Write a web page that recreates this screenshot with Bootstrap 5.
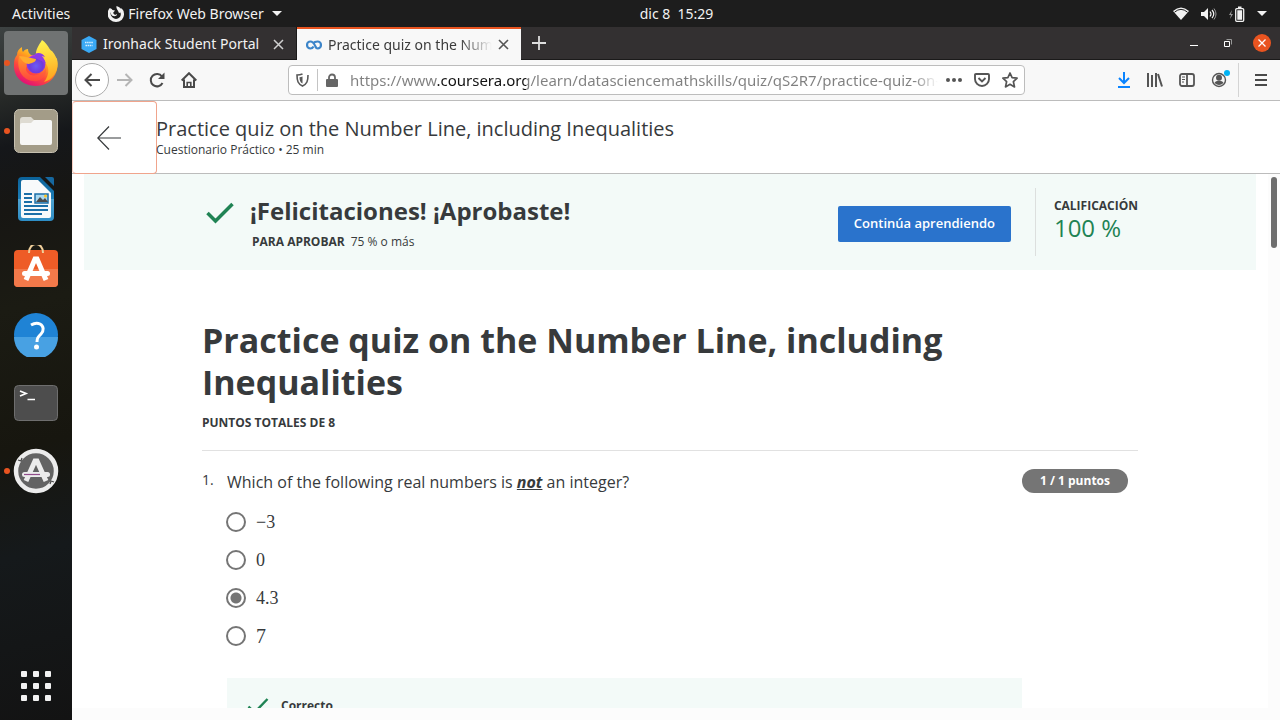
<!DOCTYPE html>
<html lang="es">
<head>
<meta charset="utf-8">
<meta name="viewport" content="width=device-width, initial-scale=1">
<title>Practice quiz on the Number Line, including Inequalities</title>
<link href="https://cdn.jsdelivr.net/npm/bootstrap@5.3.0/dist/css/bootstrap.min.css" rel="stylesheet">
<style>
  body { font-family: "Open Sans", "Noto Sans", sans-serif; color: #373a3c; background: #fff; }
  .shell-ui { font-family: "Noto Sans", "Open Sans", sans-serif; font-size: 14px; line-height: 20px; flex: none; }
  button { color: inherit; }
  .plain { background: none; border: 0; padding: 0; display: flex; align-items: center; justify-content: center; font: inherit; }
  svg { display: block; flex: none; }

  /* desktop bar */
  .desk-bar { height: 27px; background: #1d1d1d; color: #f2f2f2; padding: 0 13px 0 12px; }
  .desk-left { flex: 1 1 74px; gap: 38px; }
  .desk-right { flex: 1 1 0; }
  .clock { white-space: pre; }

  /* launcher */
  .dock { width: 72px; padding: 4px 4px 2px; background: linear-gradient(165deg, #3d4242 0, #272a28 10%, #15171a 17%, #171613 26%, #1b1b13 40%, #17160f 60%, #15191b 75%, #131313 100%); }
  .dock-item { height: 64px; width: 64px; border-radius: 4px; position: relative; }
  .dock-item.focused { background: #707373; }
  .dock-item.running::before { content: ""; position: absolute; left: 0; top: 29px; width: 6px; height: 6px; border-radius: 50%; background: #e95420; }

  /* browser chrome */
  .tab-strip { height: 33px; background: #333031; color: #f2f2f2; border-bottom: 1px solid #1b1a1a; }
  .tab { width: 225px; padding: 2px 12px 0 9px; gap: 6px; height: 32px; border-right: 1px solid #1b1a1a; }
  .tab.current { height: 33px; background: #f8f8f8; color: #3b3b3b; border-top: 2px solid #e95420; border-right: 0; width: 224px; padding-top: 0; }
  .tab span { overflow: hidden; white-space: nowrap; flex: 1 1 0; }
  .tab.current span { -webkit-mask-image: linear-gradient(to left, transparent, #000 32px); mask-image: linear-gradient(to left, transparent, #000 32px); }
  .win-buttons { gap: 26px; padding-right: 9px; }
  .win-close { width: 18px; height: 18px; border-radius: 50%; background: #e95420; margin-left: -5px; }
  .tool-row { height: 41px; background: #f8f8f8; border-bottom: 1px solid #bcbcbc; color: #4f4f4f; padding: 0 13px 0 3px; }
  .back-btn { width: 34px; height: 34px; border: 1px solid #ababab; border-radius: 50%; background: #fff; }
  .url-box { height: 30px; width: 737px; min-width: 0; margin-left: 91px; border: 1px solid #bdbdbd; border-radius: 4px; background: #fff; padding: 0 6px 0 3px; }
  .url-sep { width: 1px; height: 22px; background: #c4c4c4; }
  .url-input { border: 0; outline: 0; padding: 0; min-width: 0; height: 24px; font-size: 15px; color: transparent; background: linear-gradient(to right, #808080 91px, #111 91px, #111 180px, #808080 180px); background-clip: text; -webkit-background-clip: text; -webkit-mask-image: linear-gradient(to left, transparent, #000 24px); mask-image: linear-gradient(to left, transparent, #000 24px); }
  .menu-sep { width: 1px; height: 34px; background: #d4d4d4; }

  /* course header */
  .course-head { height: 73px; border-bottom: 1px solid #bcbcbc; }
  .head-back { width: 85px; height: 73px; margin-right: -1px; padding-right: 12px; border: 1px solid #f0a48c; border-left-color: #f8d0c4; border-radius: 4px; }
  .head-title { font-size: 20px; line-height: 24px; }
  .meta { font-size: 12px; line-height: 18px; }
  .tag { font-size: 12px; line-height: 18px; font-weight: 700; }

  /* scrolled page */
  .scroller { min-height: 0; }
  .view { overflow: hidden; min-width: 0; }
  .v-track { width: 12px; background: #fcfcfc; padding: 3px; }
  .v-thumb { width: 6px; height: 71px; border-radius: 3px; background: #6e6e6e; }
  .h-track { height: 12px; background: #fcfcfc; }
  .measure { max-width: 936px; margin: 0 auto; }
  .result { background: #f3faf8; margin: 0 12px; height: 96px; }
  .result-check { margin: 28px 0 0 4px; }
  .result-title { font-size: 24px; line-height: 32px; font-weight: 700; margin: 0; padding-top: 21px; }
  .pass-line { gap: 6px; padding: 6px 0 0 2px; }
  .go-btn { background: #2a73cc; color: #fff; border: 0; border-radius: 2px; height: 36px; width: 173px; padding: 0; font-size: 13px; font-weight: 600; margin: 32px 24px 0 auto; }
  .grade { border-left: 1px solid #dcdfde; height: 68px; margin-top: 14px; padding: 9px 0 0 18px; }
  .grade-value { font-size: 24px; line-height: 26px; color: #1f8354; }
  .quiz-title { font-size: 34px; line-height: 42px; font-weight: 700; margin: 0; }
  .quiz-head { padding: 49px 0 18px; border-bottom: 1px solid #e1e1e1; }
  .total { padding-top: 11px; }
  .q-row { padding-top: 18px; }
  .q-num { width: 25px; font-size: 14px; line-height: 22px; }
  .q-text { font-size: 16px; line-height: 26px; }
  .points { background: #757575; color: #fff; border-radius: 12px; width: 106px; height: 24px; line-height: 24px; margin-right: 10px; }
  .choices { border: 0; padding: 0; margin: 17px 0 0 24px; }
  .choice { height: 38px; display: flex; align-items: flex-start; gap: 10px; padding: 0; margin: 0; min-height: 0; }
  .choice .form-check-input { width: 20px; height: 20px; margin: 0; float: none; border: 2px solid #757575; }
  .choice .form-check-input:checked { background: radial-gradient(circle, #757575 5px, #fff 6px); }
  .choice label { font: 18px/20px "Liberation Serif", serif; }
  .choice label.big { font-size: 20px; }
  .feedback { background: #f3faf8; margin: 14px 116px 0 25px; padding: 19px 20px; gap: 12px; }
</style>
</head>
<body>
<div class="vh-100 d-flex flex-column overflow-hidden">

  <header class="desk-bar shell-ui d-flex align-items-center">
    <div class="desk-left d-flex align-items-center">
      <button class="plain">Activities</button>
      <button class="plain">
        <svg width="16" height="16" viewBox="0 0 16 16" fill="none" stroke="#f2f2f2"><path d="M3 3C.5 6 .5 10 3.200 12.500C6 15 10 15 12.800 12.500C15 10 15 6 12.500 3.500" stroke-width="3.200"/><path d="M8.500 0C12 1 14 3 14 6l-3 1C10 4 8 3 8.500 0zM2.500 2l2 2L7 4.500 5 7l2 2 2-1c0 3-5 3-6 0z" fill="#f2f2f2" stroke="none"/></svg>
        <span class="ps-1 me-2">Firefox Web Browser</span>
        <svg width="10" height="5"><path d="M0 0h10L5 5z" fill="#f2f2f2"/></svg>
      </button>
    </div>
    <time class="clock">dic 8  15:29</time>
    <div class="desk-right d-flex justify-content-end align-items-center gap-2">
      <svg width="16" height="14" viewBox="0 0 16 14"><path d="M0 4Q8-3 16 4L8 13z" fill="#f2f2f2"/><path d="M1.500 5.200Q8-.5 14.500 5.200" stroke="#1d1d1d" fill="none"/></svg>
      <svg class="ms-1" width="16" height="14" viewBox="0 0 16 14"><path d="M0 5h3l4-4v12L3 9H0z" fill="#f2f2f2"/><path d="M9 4.500q2 2.500 0 5M11 3q3.500 4 0 8" stroke="#f2f2f2" fill="none" stroke-width="1.200"/><path d="M13 1.500q4 5.500 0 11" stroke="#999" fill="none"/></svg>
      <svg class="ms-1" width="16" height="16" viewBox="0 0 16 16"><path d="M3 4L0 9h2l-1 4 3-5H2z" fill="#999"/><rect x="6.700" y="2.700" width="8" height="12.600" rx="1" fill="none" stroke="#f2f2f2" stroke-width="1.300"/><path d="M9 .5h3.500V2H9zM8.300 4.300h4.800v9.400H8.300z" fill="#f2f2f2"/></svg>
      <svg class="ms-1" width="10" height="5"><path d="M0 0h10L5 5z" fill="#f2f2f2"/></svg>
    </div>
  </header>

  <div class="flex-grow-1 d-flex scroller">
    <nav class="dock d-flex flex-column gap-1 flex-shrink-0" aria-label="Dock">
      <button class="plain dock-item focused running" aria-label="Firefox">
        <svg width="46" height="48" viewBox="0 0 46 48">
          <defs>
            <linearGradient id="fxBody" x1=".85" y1=".1" x2=".3" y2="1"><stop offset="0" stop-color="#fff44f"/><stop offset=".35" stop-color="#ffa51e"/><stop offset=".65" stop-color="#ff4b3a"/><stop offset="1" stop-color="#e00b7c"/></linearGradient>
            <linearGradient id="fxInner" x2="0" y2="1"><stop offset="0" stop-color="#ff9a2a"/><stop offset="1" stop-color="#ff4440"/></linearGradient>
            <radialGradient id="fxGlobe" cx=".5" cy=".6" r=".6"><stop offset="0" stop-color="#6a5cf5"/><stop offset=".6" stop-color="#6f3bdc"/><stop offset="1" stop-color="#b833e1"/></radialGradient>
            <linearGradient id="fxTail" x1=".5" y1="0" x2=".6" y2="1"><stop offset="0" stop-color="#fff44f"/><stop offset="1" stop-color="#ffa01c"/></linearGradient>
          </defs>
          <path d="M9 8c0 2 0 4 1 5 1-2 3-3 5-3 0 3 1 4 3 6l10 1C32 9 40 14 44 20c3 14-6 27-21 27C9 47 0 37 1 25c0-4 1-7 3-9 0-4 2-6 5-8z" fill="url(#fxBody)"/>
          <path d="M29 1c7 5 7 10 10 11 7 8 7 17 2 24-3 4-6 6-10 7 6-7 6-17-1-21-3-2-5-2-7-4-1-7 3-12 6-17z" fill="url(#fxTail)"/>
          <path d="M6 18q4-2 8 0c3 1 6 1 9 2 1 3-4 4-7 5-3 1-4 5-2 8 4 6 15 4 19-4 1 9-6 14-13 13C10 41 3 31 6 18z" fill="url(#fxInner)"/>
          <circle cx="23" cy="25" r="9.500" fill="url(#fxGlobe)"/>
          <path d="M22 15c3-2 8-1 10 3l-3-1 4 7-11-5z" fill="#8a3be8"/>
          <path d="M6 17q8 1 17 3c0 3-4 4-7 5-4 0-7-3-10-8z" fill="#ffac2e"/>
        </svg>
      </button>
      <button class="plain dock-item running" aria-label="Files">
        <svg width="44" height="44" viewBox="0 0 44 44"><rect x=".5" y=".5" width="43" height="43" rx="5" fill="#a39c88" stroke="#c6c0b0"/><path d="M6 11q0-3 3-3h8l3 3h15q3 0 3 3v5H6z" fill="#dedbd2"/><path d="M6 16q0-2 2-2h9l3-3h16q2 0 2 2v21q0 2-2 2H8q-2 0-2-2z" fill="#f7f7f6"/></svg>
      </button>
      <button class="plain dock-item" aria-label="LibreOffice Writer">
        <svg width="38" height="46" viewBox="0 0 38 46"><defs><linearGradient id="lo" x2="0" y2="1"><stop offset="0" stop-color="#0b6299"/><stop offset=".5" stop-color="#1d7eb8"/><stop offset=".5" stop-color="#4fa3d1"/><stop offset="1" stop-color="#2d8dc5"/></linearGradient></defs><path d="M5 1h18l14 14v26q0 4-4 4H5q-4 0-4-4V5q0-4 4-4z" fill="url(#lo)"/><path d="M28 1h7q2 0 2 2v7z" fill="#1668a0"/><path d="M6 4h15l13 13v23q0 2-2 2H6q-2 0-2-2V6q0-2 2-2z" fill="#f8fafb"/><path d="M7 18h8M7 22h8M7 26h8M7 30h24M7 34h24M7 38h18" stroke="#1b6fa8" stroke-width="2"/><path d="M18 18h13v9H18z" fill="#a8d8f0" stroke="#1b6fa8" stroke-width="1.500"/><path d="M19 26l4-5 3 3 2-2 3 4z" fill="#4b4b4b"/><circle cx="28.500" cy="20" r="1.500" fill="#ffc320"/></svg>
      </button>
      <button class="plain dock-item" aria-label="Ubuntu Software">
        <svg width="44" height="44" viewBox="0 0 44 44"><rect y="5" width="44" height="37" rx="4" fill="#ee5c27"/><path d="M0 24h44v14q0 4-4 4H4q-4 0-4-4z" fill="#f2794a"/><path d="M15 8c0-12 14-12 14 0" fill="none" stroke="#efcf9b" stroke-width="2"/><path d="M12 35l9-21h2l9 21" fill="none" stroke="#fff" stroke-width="5"/><rect x="8" y="26" width="28" height="5" rx="2.500" fill="#fff"/></svg>
      </button>
      <button class="plain dock-item" aria-label="Help">
        <svg width="44" height="44" viewBox="0 0 44 44"><circle cx="22" cy="22" r="22" fill="#1f83d5"/><path d="M0 24h44a22 22 0 0 1-44 0z" fill="#48a1e3"/><path d="M17 12q5-3 9-1c4 2 4 7 1 10-3 3-4 4-4 8" fill="none" stroke="#fff" stroke-width="3"/><circle cx="22.500" cy="34" r="2.500" fill="#fff"/></svg>
      </button>
      <button class="plain dock-item" aria-label="Terminal">
        <svg width="44" height="36" viewBox="0 0 44 36"><rect x=".5" y=".5" width="43" height="35" rx="4" fill="#4d4d4d" stroke="#6e6e6e"/><path d="M6 6l6 2.500L6 11M13.500 14.500H21" fill="none" stroke="#fff" stroke-width="1.700"/></svg>
      </button>
      <button class="plain dock-item running" aria-label="Software Updater">
        <svg width="46" height="46" viewBox="0 0 46 46"><circle cx="23" cy="23" r="20" fill="#636363" stroke="#ececec" stroke-width="4.500"/><path d="M5 12l3 1 1-3M41 34l-3-1-1 3" fill="none" stroke="#4c4c4c" stroke-width="1.300"/><path d="M13 33l9-20h2l9 20" fill="none" stroke="#ececec" stroke-width="5"/><rect x="9" y="24" width="28" height="5" rx="2.500" fill="#ececec"/><path d="M11 26.500h16" stroke="#924d8b" stroke-width="1.200"/></svg>
      </button>
      <button class="plain dock-item mt-auto" aria-label="Show applications">
        <svg width="30" height="30" viewBox="0 0 30 30" fill="#f2f2f2"><rect width="6" height="6" rx="1"/><rect x="12" width="6" height="6" rx="1"/><rect x="24" width="6" height="6" rx="1"/><rect y="12" width="6" height="6" rx="1"/><rect x="12" y="12" width="6" height="6" rx="1"/><rect x="24" y="12" width="6" height="6" rx="1"/><rect y="24" width="6" height="6" rx="1"/><rect x="12" y="24" width="6" height="6" rx="1"/><rect x="24" y="24" width="6" height="6" rx="1"/></svg>
      </button>
    </nav>

    <div class="flex-grow-1 d-flex flex-column view">
      <div class="tab-strip shell-ui d-flex">
        <div class="tab d-flex align-items-center">
          <svg width="16" height="17" viewBox="0 0 16 17"><path d="M8 0l7.500 4v9L8 17 .5 13V4z" fill="#3aa9f5"/><path d="M4 6.500h8M4.500 9.500h7" stroke="#d8efff" stroke-width="1.600" stroke-dasharray="1.500 .6"/></svg>
          <span>Ironhack Student Portal</span>
          <button class="plain" aria-label="Cerrar"><svg width="11" height="11" stroke="#d0d0d0" stroke-width="1.500"><path d="M1 1l9 9M10 1l-9 9"/></svg></button>
        </div>
        <div class="tab current d-flex align-items-center">
          <svg width="16" height="10" viewBox="0 0 16 10" fill="none" stroke="#3d85c9" stroke-width="2.200"><path d="M9.600 6.600C8.600 4.500 7 1.500 4.400 1.500a3.400 3.500 0 0 0 0 7c1.500 0 2.500-.8 3.200-2M7 3.500C8 2.200 9.500 1.500 11.600 1.500a3.400 3.500 0 0 1 0 7c-1 0-1.600-.5-2-1.900"/></svg>
          <span>Practice quiz on the Number Line</span>
          <button class="plain" aria-label="Cerrar"><svg width="11" height="11" stroke="#555" stroke-width="1.600"><path d="M1 1l9 9M10 1l-9 9"/></svg></button>
        </div>
        <button class="plain ms-2 px-1" aria-label="Nueva"><svg width="12" height="14" viewBox="1 0 12 14" overflow="visible" stroke="#dedede" stroke-width="1.800"><path d="M7 0v14M0 7h14"/></svg></button>
        <div class="win-buttons ms-auto d-flex align-items-center">
          <button class="plain" aria-label="Minimizar"><svg width="8" height="8" stroke="#fff"><path d="M0 6.500h8"/></svg></button>
          <button class="plain" aria-label="Restaurar"><svg width="8" height="8" fill="none"><path d="M.5 2.500h5v5h-5z" stroke="#fff"/><path d="M2.500.5h5v5" stroke="#999"/></svg></button>
          <button class="plain win-close" aria-label="Cerrar"><svg width="8" height="8" stroke="#fff" stroke-width="1.300"><path d="M.5.5l7 7M7.500.5l-7 7"/></svg></button>
        </div>
      </div>

      <div class="tool-row shell-ui d-flex align-items-center">
        <button class="plain back-btn" aria-label="Atrás"><svg width="16" height="14" fill="none" stroke="#4a4a4a" stroke-width="2"><path d="M16 7H1M7.500 1l-6 6 6 6"/></svg></button>
        <button class="plain ms-2" aria-label="Adelante"><svg width="16" height="14" fill="none" stroke="#b5b5b5" stroke-width="2"><path d="M0 7h15M8.500 1l6 6-6 6"/></svg></button>
        <button class="plain ms-3" aria-label="Recargar"><svg width="16" height="16" fill="none" stroke="#4a4a4a" stroke-width="2"><path d="M13.500 11A6.200 6.200 0 1 1 13 4.500"/><path d="M15.500.5v6.500H9z" fill="#4a4a4a" stroke="none"/></svg></button>
        <button class="plain ms-3" aria-label="Inicio"><svg width="16" height="16" fill="none" stroke="#4a4a4a" stroke-width="2"><path d="M.7 8.500L8 1.200l7.300 7.300M3 7.500V15h10V7.500"/><path d="M6.200 15v-4.500h3.600V15" stroke-width="1.600"/></svg></button>
        <div class="url-box d-flex align-items-center">
          <svg class="ms-1" width="13" height="14" viewBox="0 0 13 14"><path d="M6.500 1Q4 2 1 2C1 8 2 11 6.500 13 11 11 12 8 12 2 9 2 6.500 1z" fill="none" stroke="#585858" stroke-width="1.600"/><path d="M6.500 3.500q-1.500.7-3 .7c0 3 .6 5 3 6.300z" fill="#585858"/></svg>
          <i class="url-sep ms-2 me-2"></i>
          <svg width="12" height="14"><path d="M3 7V4.500a3 3 0 0 1 6 0V7" fill="none" stroke="#666" stroke-width="1.800"/><rect y="6" width="12" height="8" rx="1" fill="#666"/></svg>
          <input class="url-input flex-grow-1 ms-2 ps-1 me-2" aria-label="Dirección" value="https://www.coursera.org/learn/datasciencemathskills/quiz/qS2R7/practice-quiz-on-the-number-line">
          <button class="plain" aria-label="Más"><svg width="16" height="4" fill="#555"><circle cx="2" cy="2" r="2"/><circle cx="8" cy="2" r="2"/><circle cx="14" cy="2" r="2"/></svg></button>
          <button class="plain ms-2 ps-1" aria-label="Pocket"><svg width="16" height="14" fill="none" stroke="#555" stroke-width="1.900"><path d="M1 2q0-1 1-1h12q1 0 1 1v4a7 7 0 0 1-14 0z"/><path d="M4.500 5L8 8.500 11.500 5"/></svg></button>
          <button class="plain ms-2 ps-1" aria-label="Marcador"><svg width="16" height="16" fill="none" stroke="#555" stroke-width="1.700" stroke-linejoin="round"><path d="M8 1l2.100 4.700 5 .5-3.700 3.500 1.100 5.200L8 12.300 3.500 14.900l1.100-5.200L.9 6.200l5-.5z"/></svg></button>
        </div>
        <div class="ms-auto d-flex align-items-center gap-3">
          <button class="plain" aria-label="Descargas"><svg width="14" height="16" fill="none" stroke="#0a84ff" stroke-width="2"><path d="M7 0v11M2 6l5 5 5-5M1 15h12"/></svg></button>
          <button class="plain" aria-label="Biblioteca"><svg width="16" height="14" stroke="#555" stroke-width="2"><path d="M1 0v14M5 2v12M9 0v14M11 1l4 12.500"/></svg></button>
          <button class="plain" aria-label="Barra lateral"><svg width="16" height="14" fill="none" stroke="#555" stroke-width="1.800"><rect x="1" y="1" width="14" height="12" rx="2"/><path d="M8 1v12"/><path d="M3 4h3M3 6.500h3M3 9h2" stroke-width="1"/></svg></button>
          <button class="plain" aria-label="Cuenta"><svg width="19" height="22"><circle cx="8" cy="11" r="6.500" fill="none" stroke="#555" stroke-width="1.400"/><circle cx="8" cy="8.800" r="3" fill="#555"/><path d="M3.500 14c1-3 8-3 9 0q-4.500 4-9 0z" fill="#555"/><circle cx="16" cy="4" r="3" fill="#00b3f4"/></svg></button>
        </div>
        <i class="menu-sep ms-2 me-3"></i>
        <button class="plain" aria-label="Menú"><svg width="12" height="12" stroke="#4a4a4a" stroke-width="2"><path d="M0 1h12M0 6h12M0 11h12"/></svg></button>
      </div>

      <div class="course-head d-flex align-items-start flex-shrink-0">
        <button class="plain head-back flex-shrink-0" aria-label="Volver"><svg width="24" height="24" fill="none" stroke="#373a3c" stroke-width="1.200"><path d="M24 12H1M12 .5L.8 12 12 23.500"/></svg></button>
        <div class="pt-3">
          <div class="head-title">Practice quiz on the Number Line, including Inequalities</div>
          <div class="meta">Cuestionario Práctico • 25 min</div>
        </div>
      </div>

      <div class="flex-grow-1 d-flex scroller">
        <main class="flex-grow-1 view">
          <section class="result">
            <div class="measure d-flex align-items-start">
              <svg class="result-check" width="28" height="22" fill="none" stroke="#1f8354" stroke-width="3.500"><path d="M1.500 11l8 8L26.500 2"/></svg>
              <div class="ms-3">
                <h2 class="result-title">¡Felicitaciones! ¡Aprobaste!</h2>
                <div class="pass-line d-flex"><span class="tag">PARA APROBAR</span><span class="meta">75 % o más</span></div>
              </div>
              <button class="btn go-btn">Continúa aprendiendo</button>
              <div class="grade">
                <div class="tag">CALIFICACIÓN</div>
                <div class="grade-value">100 %</div>
              </div>
            </div>
          </section>
          <div class="measure">
            <div class="quiz-head">
              <h1 class="quiz-title">Practice quiz on the Number Line, including Inequalities</h1>
              <div class="total tag">PUNTOS TOTALES DE 8</div>
            </div>
            <div class="q-row d-flex align-items-start">
              <div class="q-num">1.</div>
              <div class="q-text flex-grow-1" id="q1">Which of the following real numbers is <strong><em><u>not</u></em></strong> an integer?</div>
              <div class="points tag text-center">1 / 1 puntos</div>
            </div>
            <fieldset class="choices" aria-labelledby="q1">
              <div class="form-check choice"><input class="form-check-input" type="radio" name="q1" id="a1"><label for="a1">−3</label></div>
              <div class="form-check choice"><input class="form-check-input" type="radio" name="q1" id="a2"><label for="a2">0</label></div>
              <div class="form-check choice"><input class="form-check-input" type="radio" name="q1" id="a3" checked><label for="a3">4.3</label></div>
              <div class="form-check choice"><input class="form-check-input" type="radio" name="q1" id="a4"><label class="big" for="a4">7</label></div>
            </fieldset>
            <div class="feedback d-flex align-items-start">
              <svg width="22" height="18" fill="none" stroke="#1f8354" stroke-width="2.400"><path d="M1.500 9.500l6 6L20.500 2"/></svg>
              <div class="tag">Correcto</div>
            </div>
          </div>
        </main>
        <div class="v-track flex-shrink-0"><div class="v-thumb"></div></div>
      </div>
      <div class="h-track flex-shrink-0"></div>
    </div>
  </div>
</div>
<script src="https://cdn.jsdelivr.net/npm/bootstrap@5.3.0/dist/js/bootstrap.bundle.min.js"></script>
</body>
</html>
